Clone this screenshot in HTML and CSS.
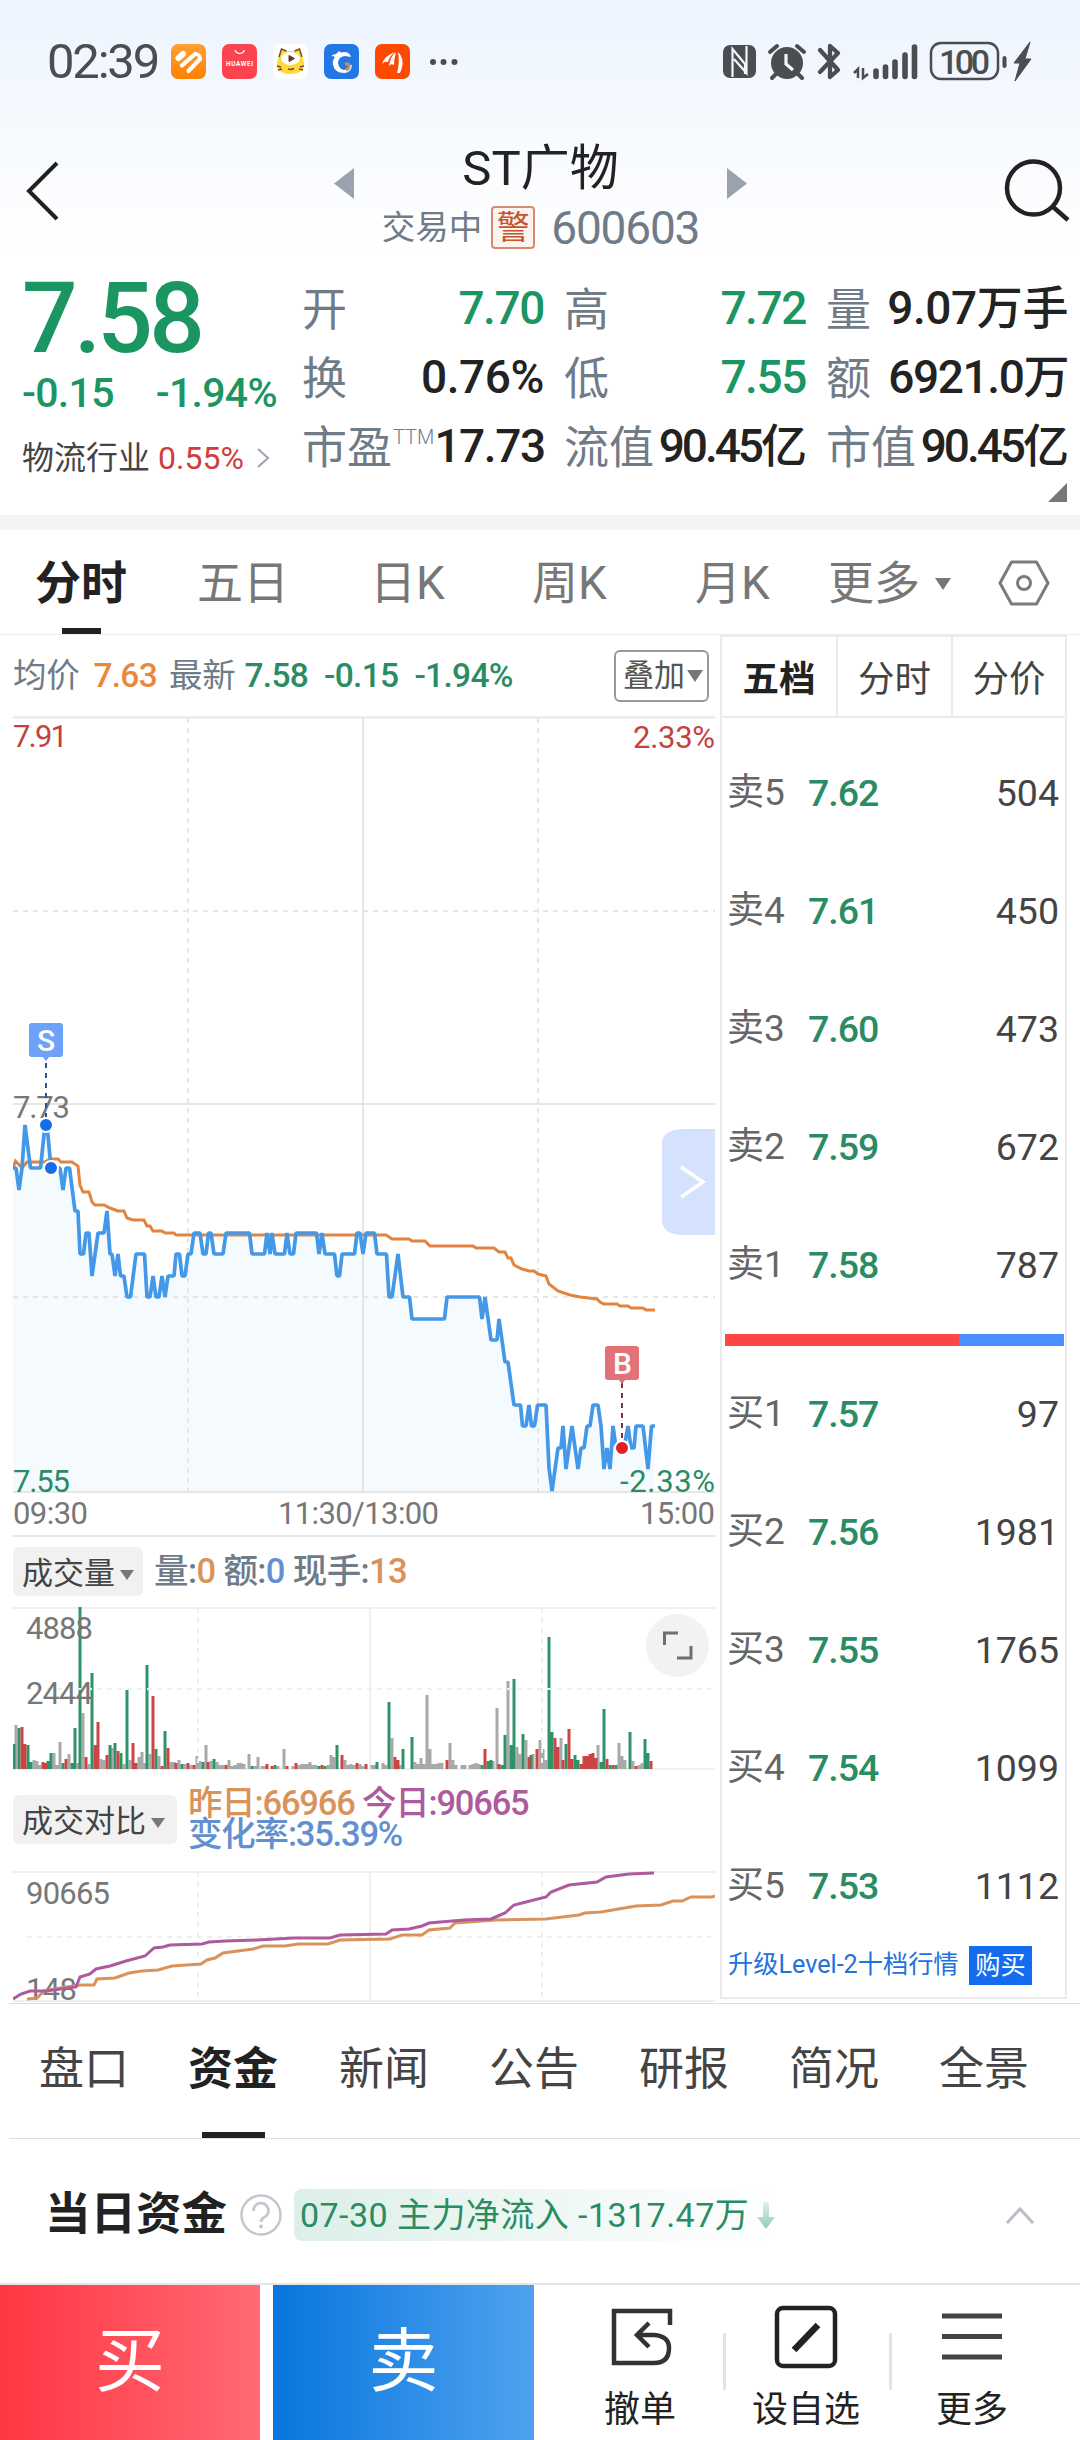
FILE: index.html
```html
<!DOCTYPE html>
<html lang="zh-CN">
<head>
<meta charset="utf-8">
<title>ST广物 600603</title>
<link rel="stylesheet" href="styles.css">
</head>
<body>
<div class="top">
  <div class="status">
    <span class="clock">02:39</span>
    <svg class="app" viewBox="0 0 35 35"><defs><linearGradient id="ga" x2="0" y2="1"><stop offset="0" stop-color="#ff9f35"/><stop offset="1" stop-color="#ff8200"/></linearGradient></defs><rect width="35" height="35" rx="7" fill="url(#ga)"/><g stroke="#fff" stroke-linecap="round" fill="none"><path d="M7.500 14L12 10" stroke-width="6"/><path d="M11 21.500L24 10M17.500 27L29 15" stroke-width="4.200"/><path d="M24 10q5 0 5 5" stroke-width="3.600"/></g></svg>
    <svg class="app" viewBox="0 0 35 35"><rect width="35" height="35" rx="7" fill="#fc4450"/><path d="M13 6a5 5 0 0 0 9.500 0" fill="none" stroke="#fff" stroke-width="1.100"/><text x="4" y="22" font-size="6.400" font-weight="700" fill="#fff" textLength="27">HUAWEI</text></svg>
    <svg class="app" viewBox="0 0 35 35"><rect width="35" height="35" rx="7" fill="#fff"/><path d="M6 13L8.500 5l5 2h8l5-2L29 13q4 8 0 13-4 4-11.500 4T6 26Q2 21 6 13Z" fill="#ffd83a"/><path d="M6 13L8.500 5l5 2M21.500 7l5-2L29 13M4 22l4 1M5 26l4-1M31 22l-4 1M30 26l-4-1M15 25q3 1 6-.5" stroke="#71512f" stroke-width="1.500" fill="none"/><ellipse cx="17.500" cy="14.500" rx="9.500" ry="6.500" fill="#fff"/><path d="M16 11.500v6l5.500-3z" fill="#6b3627" stroke="#6b3627" stroke-linejoin="round"/></svg>
    <svg class="app" viewBox="0 0 35 35"><rect width="35" height="35" rx="7" fill="#2277e5"/><path d="M7 12q3-2 5-2l3-3 2 1.500q8-2 10 4.500l-6-1q-7 1-7 7 1 6 6 7 5-1 6-5h2q-1 8-8 8-9 0-11-8-1-4 2-8-2-1-4-1z" fill="#fff"/><path d="M21 20q4-1 4 2t-3 4" fill="none" stroke="#c28e65" stroke-width="3"/></svg>
    <svg class="app" viewBox="0 0 35 35"><rect width="35" height="35" rx="7" fill="#fe4900"/><path d="M7 20Q9 12 20 8q-6 5-7 10-3-1-6 2zM14 22Q15 13 21 8q-2 7-2 13-3-2-5 1zM22 29Q25 18 23 8q8 8 2 21z" fill="#fff"/></svg>
    <svg class="dots" viewBox="0 0 28 8"><circle cx="3" cy="4" r="3"/><circle cx="13.500" cy="4" r="3"/><circle cx="24.500" cy="4" r="3"/></svg>
    <svg class="sys" viewBox="722 40 312 42" fill="none" stroke="#4b4d50">
      <rect x="723" y="44" width="33" height="33" rx="7" fill="#4b4d50" stroke="none"/>
      <path d="M732.500 76V48L745 63V73M746.500 45V72L734 58" stroke="#f2f6fe" stroke-width="2.200"/>
      <circle cx="787" cy="62" r="16" fill="#4b4d50" stroke="none"/>
      <path d="M770 51l7-6M804 51l-7-6M776 73l-4 4M798 73l4 4" stroke-width="4" stroke-linecap="round"/>
      <path d="M786 53v10l7 6" stroke="#f2f6fe" stroke-width="3.200"/>
      <path d="M820 49L838 69L830 76V45L838 52L820 71" stroke-width="4.300" stroke-linejoin="round" stroke-linecap="round"/>
      <path d="M854 72l4-4v9M868 73l-5 4V67" stroke-width="2.500"/>
      <path d="M876 70v5.500M885.500 66v9.500M895 61v14.500M905 54v21.500M914.500 46v29.500" stroke-width="5.600" stroke-linecap="round"/>
      <rect x="931" y="42" width="67" height="36" rx="10" stroke-width="2.500"/>
      <path d="M1004.500 57v8" stroke-width="4" stroke-linecap="round"/>
      <path d="M1030 41L1014 62h6l-5 18 16-22h-6l5-17z" fill="#4b4d50" stroke="#4b4d50" stroke-width="1" stroke-linejoin="round"/>
      <text x="939" y="72.500" font-size="34" font-weight="500" fill="#4b4d50" stroke="none" textLength="51">100</text>
    </svg>
  </div>
  <div class="header">
    <svg class="back" viewBox="0 0 34 60"><path d="M31 2L3 30L31 58" fill="none" stroke="#222" stroke-width="4"/></svg>
    <svg class="tri prev" viewBox="0 0 20 31"><path d="M20 0v31L0 15.500z"/></svg>
    <div class="name">
      <h1>ST广物</h1>
      <div class="sub"><span class="state">交易中</span><span class="warn">警</span><span class="code">600603</span></div>
    </div>
    <svg class="tri next" viewBox="0 0 20 31"><path d="M0 0v31L20 15.500z"/></svg>
    <svg class="search" viewBox="0 0 66 64"><circle cx="29.500" cy="29" r="26.500" fill="none" stroke="#222" stroke-width="4.500"/><path d="M48 47L64 61" stroke="#222" stroke-width="4.500"/></svg>
  </div>
  <div class="quote">
    <div class="now">
      <div class="price">7.58</div>
      <div class="change"><span>-0.15</span><span>-1.94%</span></div>
      <div class="industry"><span>物流行业</span><b>0.55%</b><svg viewBox="0 0 14 20"><path d="M2 1L12 10L2 19" fill="none" stroke="#9aa2ab" stroke-width="2"/></svg></div>
    </div>
    <div class="stats">
      <div><label>开</label><span class="g">7.70</span></div>
      <div><label>高</label><span class="g">7.72</span></div>
      <div><label>量</label><span class="loose">9.07万手</span></div>
      <div><label>换</label><span class="loose">0.76%</span></div>
      <div><label>低</label><span class="g">7.55</span></div>
      <div><label>额</label><span>6921.0万</span></div>
      <div><label>市盈<sup>TTM</sup></label><span>17.73</span></div>
      <div><label>流值</label><span class="tight">90.45亿</span></div>
      <div><label>市值</label><span class="tight">90.45亿</span></div>
    </div>
  </div>
  <div class="corner"></div>
</div>
<div class="band"></div>

<nav class="periods">
  <span class="on">分时</span><span>五日</span><span>日K</span><span>周K</span><span>月K</span><span class="more">更多<i class="caret"></i></span>
  <svg viewBox="0 0 52 46" fill="none" stroke="#7b7b7b" stroke-width="3"><path d="M13.500 2h25L50 23L38.500 44h-25L2 23z" stroke-linejoin="round"/><circle cx="26" cy="23" r="6.500"/></svg>
</nav>

<main class="board">
  <section class="charts">
    <div class="info">
      <label>均价</label><span class="o">7.63</span><label class="l2">最新</label><span class="v2">7.58</span><span class="v3">-0.15</span><span class="v3">-1.94%</span>
      <button>叠加<i class="caret"></i></button>
    </div>
    <svg class="plot" viewBox="13 716 702 821" height="821" font-size="31">
      <path d="M13 1168H16L19 1190L22 1168L25 1125L30.500 1168H40.500L45 1125H47L51 1168H60L63 1190L66 1168H69.500L75 1211H78L80 1254H83.500L86 1233H89L92 1276L98 1233H104L107 1211L110 1254H112L115 1276L118 1254L120.500 1276H124L127 1297H130.500L136 1254H144.500L147 1297H150L153 1276L156 1297H159L162 1276L165 1297L168 1276H174L176 1254H179.500L182 1276H185L188 1254H191L194 1233H200L203 1254H206L208.500 1233H211L214 1254H223L226 1233H249.500L252 1254H264.500L267 1233L270 1254L272 1233L275 1254H284.500L287 1233L290 1254H293.500L296 1233H316.500L319 1254L322 1233L325 1254H334.500L337 1276H339.500L342 1254H354.500L357 1233H360L363 1254L366 1233H374.500L377 1254H386.500L389 1297H392L398 1254L403 1297H409.500L412 1319H444.500L447 1297H479.500L482 1319L485 1297L491 1340H497L499 1319L505 1362H508L514 1405H520.500L522.500 1426H526L529 1405L531.500 1426H534.500L537.500 1405H546L549 1468L552 1491L558 1448H561L563 1426L566 1469L572 1426L578 1469L581 1448H584L587 1426H590L593 1405H598L601 1426L604 1469L607 1448L610 1469L613 1426L616 1448H624L628 1426L631 1448H634L636 1426H643L648 1469L651.500 1426H655V1492H13Z" fill="#f5faff"/>
      <g stroke="#e6e6e6" stroke-width="2" fill="none">
        <path d="M13 717.500H715M13 1104H715M363 717V1492M13 1492H715M13 1536H715"/>
        <path d="M188 718V1492M538 718V1492M13 911H715M13 1297H715" stroke-dasharray="5 5"/>
      </g>
      <path d="M13 1168L15.500 1161L22 1168L27 1162H45L50 1159H58L61 1162H72L78 1166L80 1185L83 1192H89L92 1202L95 1205H104L110 1208L118 1211H124L127 1218L133 1220H144L147 1226H150L153 1231H162L165 1233H174L176 1235H386L392 1239H409L412 1241H425L430 1246H473L476 1248H494L499 1252H505L508 1258H511L514 1265L522 1269L529 1271H534L538 1274L546 1276L549 1284L558 1291L570 1295L580 1297L597 1299L600 1302L604 1304H617L620 1306H628L631 1308H643L646 1310H655" fill="none" stroke="#e38340" stroke-width="3"/>
      <path d="M13 1168H16L19 1190L22 1168L25 1125L30.500 1168H40.500L45 1125H47L51 1168H60L63 1190L66 1168H69.500L75 1211H78L80 1254H83.500L86 1233H89L92 1276L98 1233H104L107 1211L110 1254H112L115 1276L118 1254L120.500 1276H124L127 1297H130.500L136 1254H144.500L147 1297H150L153 1276L156 1297H159L162 1276L165 1297L168 1276H174L176 1254H179.500L182 1276H185L188 1254H191L194 1233H200L203 1254H206L208.500 1233H211L214 1254H223L226 1233H249.500L252 1254H264.500L267 1233L270 1254L272 1233L275 1254H284.500L287 1233L290 1254H293.500L296 1233H316.500L319 1254L322 1233L325 1254H334.500L337 1276H339.500L342 1254H354.500L357 1233H360L363 1254L366 1233H374.500L377 1254H386.500L389 1297H392L398 1254L403 1297H409.500L412 1319H444.500L447 1297H479.500L482 1319L485 1297L491 1340H497L499 1319L505 1362H508L514 1405H520.500L522.500 1426H526L529 1405L531.500 1426H534.500L537.500 1405H546L549 1468L552 1491L558 1448H561L563 1426L566 1469L572 1426L578 1469L581 1448H584L587 1426H590L593 1405H598L601 1426L604 1469L607 1448L610 1469L613 1426L616 1448H624L628 1426L631 1448H634L636 1426H643L648 1469L651.500 1426H655" fill="none" stroke="#4398e8" stroke-width="3.700" stroke-linejoin="bevel"/>
      <g fill="#c44142"><text x="13" y="747" textLength="55">7.91</text><text x="633" y="748" textLength="82">2.33%</text></g>
      <g fill="#2a8c63"><text x="13" y="1492" textLength="57">7.55</text><text x="620" y="1492" textLength="95">-2.33%</text></g>
      <g fill="#777"><text x="13" y="1118" textLength="57">7.73</text><text x="13" y="1524" textLength="75">09:30</text><text x="278" y="1524" textLength="161">11:30/13:00</text><text x="640" y="1524" textLength="75">15:00</text></g>
      <path d="M46 1063V1120" stroke="#1e5793" stroke-width="2" stroke-dasharray="5 5"/>
      <path d="M622 1383V1442" stroke="#7f3138" stroke-width="2" stroke-dasharray="5 5"/>
      <path d="M42 1056h8l-4 5z" fill="#6ea1f8"/><rect x="29" y="1023" width="34" height="34" rx="3" fill="#6ea1f8"/>
      <path d="M618 1379h8l-4 5z" fill="#e27277"/><rect x="605" y="1346" width="34" height="34" rx="3" fill="#e27277"/>
      <g fill="#fff" font-weight="500" text-anchor="middle" font-size="30"><text x="46" y="1051">S</text><text x="622.500" y="1374">B</text></g>
      <g stroke="#fff" stroke-width="2"><circle cx="46" cy="1125" r="7" fill="#146ce8"/><circle cx="51" cy="1168" r="7" fill="#146ce8"/><circle cx="622" cy="1448" r="7" fill="#dd2023"/></g>
      <path d="M715 1129H682Q662 1130 662 1144V1220Q662 1234 682 1235H715Z" fill="#d5e2fd"/>
      <path d="M681 1167L703 1182L681 1197" fill="none" stroke="#fff" stroke-width="3.500"/>
    </svg>
    <div class="legend">
      <button>成交量<i class="caret"></i></button>
      <p>量:<b class="co">0</b> 额:<b class="cb">0</b> 现手:<b class="co">13</b></p>
    </div>
    <svg class="plot" viewBox="13 1606 702 166" height="166" font-size="31">
      <g stroke="#efefef" stroke-width="2" fill="none"><path d="M13 1608H715M370 1608V1768M13 1769H715"/></g>
      <g fill="none" stroke-width="3">
        <path stroke="#a9a9a9" d="M16 1769v-44M34 1769v-9M37 1769v-8M40 1769v-4M54 1769v-16M57 1769v-4M60 1769v-27M69 1769v-15M78 1769v-6M83 1769v-56M89 1769v-5M101 1769v-10M104 1769v-9M112 1769v-21M124 1769v-5M130 1769v-9M139 1769v-12M142 1769v-17M145 1769v-6M150 1769v-15M159 1769v-13M171 1769v-7M174 1769v-7M179 1769v-9M185 1769v-5M191 1769v-4M197 1769v-13M200 1769v-8M206 1769v-24M211 1769v-8M217 1769v-7M220 1769v-4M223 1769v-4M229 1769v-9M232 1769v-3M235 1769v-4M238 1769v-6M241 1769v-6M244 1769v-5M249 1769v-15M255 1769v-3M258 1769v-12M262 1769v-3M265 1769v-3M278 1769v-3M284 1769v-20M293 1769v-3M299 1769v-4M302 1769v-5M305 1769v-5M308 1769v-5M310 1769v-7M313 1769v-4M316 1769v-4M328 1769v-4M331 1769v-14M334 1769v-12M345 1769v-9M348 1769v-4M351 1769v-5M354 1769v-4M360 1769v-5M363 1769v-3M372 1769v-4M375 1769v-4M383 1769v-6M386 1769v-4M392 1769v-31M400 1769v-4M415 1769v-7M418 1769v-5M421 1769v-11M424 1769v-5M427 1769v-74M430 1769v-20M433 1769v-5M436 1769v-5M439 1769v-6M442 1769v-6M450 1769v-26M453 1769v-9M456 1769v-4M462 1769v-4M465 1769v-4M470 1769v-4M473 1769v-5M476 1769v-6M479 1769v-5M493 1769v-8M497 1769v-61M508 1769v-88M517 1769v-22M520 1769v-15M526 1769v-29M533 1769v-15M540 1769v-29M543 1769v-20M546 1769v-9M561 1769v-31M598 1769v-24M619 1769v-26M622 1769v-13M625 1769v-9M633 1769v-8M639 1769v-4M642 1769v-6"/>
        <path stroke="#2f9268" d="M14 1769v-25M19 1769v-41M28 1769v-24M31 1769v-7M48 1769v-8M51 1769v-16M63 1769v-6M72 1769v-6M75 1769v-41M80 1769v-162M92 1769v-96M110 1769v-24M115 1769v-26M121 1769v-16M127 1769v-79M147 1769v-104M156 1769v-20M165 1769v-38M182 1769v-5M203 1769v-7M214 1769v-10M252 1769v-3M275 1769v-4M319 1769v-3M325 1769v-3M337 1769v-24M377 1769v-7M389 1769v-67M403 1769v-20M412 1769v-32M482 1769v-4M488 1769v-8M491 1769v-9M502 1769v-4M505 1769v-34M511 1769v-24M514 1769v-90M523 1769v-35M531 1769v-14M549 1769v-132M552 1769v-37M566 1769v-25M575 1769v-14M578 1769v-9M601 1769v-7M604 1769v-60M610 1769v-4M616 1769v-4M630 1769v-37M645 1769v-30M648 1769v-16"/>
        <path stroke="#cb4545" d="M22 1769v-42M25 1769v-25M43 1769v-7M45.500 1769v-6M66 1769v-10M86 1769v-12M95 1769v-24M98 1769v-47M107 1769v-14M118 1769v-18M133 1769v-26M136 1769v-6M153 1769v-73M162 1769v-3M168 1769v-21M176 1769v-6M188 1769v-6M194 1769v-4M208 1769v-7M226 1769v-4M267 1769v-5M272 1769v-3M287 1769v-3M296 1769v-6M322 1769v-4M342 1769v-14M357 1769v-6M366 1769v-5M395 1769v-12M398 1769v-9M447 1769v-9M485 1769v-20M499 1769v-5M529 1769v-12M537 1769v-20M555 1769v-31M558 1769v-22M563 1769v-9M569 1769v-40M572 1769v-10M581 1769v-5M584 1769v-13M587 1769v-13M590 1769v-15M593 1769v-16M596 1769v-11M607 1769v-10M613 1769v-4M636 1769v-3M651 1769v-8"/>
      </g>
      <path d="M198 1608V1768M542 1608V1768M27 1689H711" stroke="#efefef" stroke-width="2" stroke-dasharray="5 5" fill="none"/>
      <g fill="#777"><text x="26" y="1639" textLength="67">4888</text><text x="26" y="1704" textLength="67">2444</text></g>
      <circle cx="677.500" cy="1645.500" r="31.500" fill="#f2f2f2"/>
      <path d="M664.500 1645V1633H678M691 1646V1658H677" fill="none" stroke="#6f6f6f" stroke-width="3"/>
    </svg>
    <div class="legend compare">
      <button>成交对比<i class="caret"></i></button>
      <p><b class="co">昨日:66966</b> <b class="cp">今日:90665</b><br><b class="cb">变化率:35.39%</b></p>
    </div>
    <svg class="plot" viewBox="13 1871 702 132" height="132" font-size="31">
      <g stroke="#efefef" stroke-width="2" fill="none"><path d="M13 1872H715M370 1872V2001M13 2001H715"/><path d="M198 1872V2001M542 1872V2001M27 1937H711" stroke-dasharray="5 5"/></g>
      <g fill="#777"><text x="26" y="1904" textLength="84">90665</text><text x="26" y="2000" textLength="51">148</text></g>
      <g fill="none" stroke-width="3">
        <path stroke="#d9935a" d="M27 1999L37 1998L44 1991L60 1988L80 1985H94L97 1979L115 1978L129 1973L142 1971L158 1970L172 1966L201 1964L207 1960L215 1958L223 1953L253 1949L263 1946H285L298 1944H328L340 1940L390 1939L402 1935H422L429 1930L450 1928L455 1923L496 1920L546 1919L579 1915L585 1913L601 1912L636 1906L661 1905L673 1901H682L691 1897H712L715 1896"/>
        <path stroke="#ad5a9e" d="M13 1999L21 1994L30 1991H46L76 1987L80 1977L90 1974L96 1969L110 1966L126 1961L145 1956L154 1948L163 1947L170 1945L202 1944L209 1942L225 1941L257 1940L294 1938H330L340 1935L386 1934L392 1930L409 1929L422 1926L429 1923L464 1920L491 1919L498 1916L505 1913L514 1905L526 1902L546 1897L551 1892L569 1885L597 1882L606 1877L629 1874L654 1873"/>
      </g>
    </svg>
  </section>
  <aside class="book">
    <div class="tabs"><span class="on">五档</span><span>分时</span><span>分价</span></div>
    <ul>
      <li><span>卖5</span><b>7.62</b><em>504</em></li>
      <li><span>卖4</span><b>7.61</b><em>450</em></li>
      <li><span>卖3</span><b>7.60</b><em>473</em></li>
      <li><span>卖2</span><b>7.59</b><em>672</em></li>
      <li><span>卖1</span><b>7.58</b><em>787</em></li>
    </ul>
    <div class="ratio"><i></i><i></i></div>
    <ul>
      <li><span>买1</span><b>7.57</b><em>97</em></li>
      <li><span>买2</span><b>7.56</b><em>1981</em></li>
      <li><span>买3</span><b>7.55</b><em>1765</em></li>
      <li><span>买4</span><b>7.54</b><em>1099</em></li>
      <li><span>买5</span><b>7.53</b><em>1112</em></li>
    </ul>
    <div class="promo"><span>升级Level-2十档行情</span><button>购买</button></div>
  </aside>
</main>

<nav class="sections"><span>盘口</span><span class="on">资金</span><span>新闻</span><span>公告</span><span>研报</span><span>简况</span><span>全景</span></nav>
<section class="fund">
  <h2>当日资金</h2>
  <svg class="help" viewBox="0 0 42 42"><circle cx="21" cy="21" r="19.500" fill="none" stroke="#c3c8ce" stroke-width="2.500"/><path d="M13.500 17a7.500 7.500 0 1 1 10.500 6.500q-3 1.500-3 4.500" fill="none" stroke="#c3c8ce" stroke-width="2.800"/><circle cx="21" cy="32.500" r="2" fill="#c3c8ce"/></svg>
  <div class="flow">07-30 主力净流入 -1317.47万<svg viewBox="0 0 18 27"><defs><linearGradient id="gd" x2="0" y2="1"><stop offset="0" stop-color="#def2ea"/><stop offset="1" stop-color="#8fceb3"/></linearGradient></defs><path d="M6 0h6v15h6L9 27L0 15h6z" fill="url(#gd)"/></svg></div>
  <svg class="up" viewBox="0 0 30 18"><path d="M2 17L15 3L28 17" fill="none" stroke="#b9bfc6" stroke-width="3"/></svg>
</section>
<footer class="bar">
  <button class="buy">买</button><button class="sell">卖</button>
  <div class="act"><svg class="undo" viewBox="0 0 64 64" fill="none" stroke="#333" stroke-width="4.500"><path d="M60 20V6H4V58H44Q59 58 59 43Q59 31 44 30H28M39 18L27 30L39 42"/></svg>撤单</div>
  <div class="act wide"><svg viewBox="0 0 64 64" fill="none" stroke="#222" stroke-width="4.500"><rect x="3" y="3" width="58" height="58" rx="6"/><path d="M20 45L44 20" stroke-width="6.500"/></svg>设自选</div>
  <div class="act last"><svg viewBox="0 0 64 64" fill="none" stroke="#444" stroke-width="4.800"><path d="M2 11H62M2 31.500H62M2 52H62"/></svg>更多</div>
</footer>
</body>
</html>
```
FILE: styles.css
```css
* { box-sizing: border-box; margin: 0; padding: 0; }
body { width: 1080px; height: 2440px; overflow: hidden; background: #fff; color: #222; font-family: Roboto, "Noto Sans CJK SC", sans-serif; }
button { border: 0; background: none; font: inherit; color: inherit; }
svg { display: block; flex: none; }
i, em { font-style: normal; }
.caret { display: inline-block; width: 16px; height: 12px; background: #777; clip-path: polygon(0 0, 100% 0, 50% 100%); }

.top { height: 515px; background: linear-gradient(#edf4fe, #fff 250px); }
.status { display: flex; align-items: center; height: 123px; padding-left: 47px; color: #4b4d50; }
.clock { width: 124px; font-size: 49px; line-height: 56px; letter-spacing: -2.2px; }
.app { width: 35px; height: 35px; margin-right: 16px; }
.dots { width: 28px; height: 8px; margin-left: 4px; fill: #4b4d50; }
.sys { width: 312px; height: 42px; margin-left: 264px; }

.header { display: flex; height: 147px; align-items: flex-start; }
.back { width: 34px; height: 60px; margin: 38px 0 0 26px; }
.tri { width: 20px; height: 31px; fill: #9aa3ad; margin-top: 45px; }
.prev { margin-left: 274px; }
.name { flex: none; width: 373px; text-align: center; }
.name h1 { padding-top: 16px; font-size: 49px; line-height: 60px; font-weight: 400; }
.sub { display: flex; justify-content: center; align-items: center; height: 57px; color: #707b88; gap: 9px; }
.state { font-size: 33.500px; line-height: 40px; }
.warn { width: 44px; height: 43px; border: 2px solid #d88970; border-radius: 4px; background: #fdf3ef; color: #c5532f; font-size: 33px; line-height: 40px; }
.code { margin-left: 7px; font-size: 46px; line-height: 52px; letter-spacing: -1.2px; }
.search { width: 66px; height: 64px; margin: 36px 0 0 257px; }

.quote { display: flex; height: 213px; color: #222; }
.now { flex: none; width: 302px; padding-left: 22px; color: #1b9562; }
.price { height: 95px; padding-top: 1px; font-size: 98px; line-height: 96px; font-weight: 500; letter-spacing: -3.800px; }
.change { display: flex; gap: 42px; height: 56px; font-size: 41px; line-height: 56px; font-weight: 500; letter-spacing: -.7px; }
.industry { display: flex; align-items: center; height: 74px; font-size: 32px; line-height: 40px; color: #444; }
.industry b { margin-left: 8px; width: 90px; font-weight: 400; color: #d33b3b; }
.industry svg { width: 14px; height: 20px; margin-left: 8px; }
.stats { display: grid; grid-template-columns: repeat(3, 242px); column-gap: 20px; grid-auto-rows: 69px; padding-top: 4px; }
.stats div { display: flex; justify-content: space-between; line-height: 69px; white-space: nowrap; }
.stats label { font-size: 45px; color: #707b88; padding-top: 4px; line-height: 65px; }
.stats span { font-size: 46px; letter-spacing: -1.400px; font-weight: 500; }
.stats .loose { letter-spacing: -.4px; }
.stats .tight { letter-spacing: -3px; padding-right: 2px; }
.stats .g { color: #1b9562; }
.stats sup { font-size: 20px; vertical-align: 20px; line-height: 0; font-weight: 300; margin-left: 1px; }
.corner { width: 19px; height: 19px; margin: 0 0 0 1048px; background: #777; clip-path: polygon(100% 0, 100% 100%, 0 100%); }
.band { height: 15px; background: #f4f4f4; }

.periods { position: relative; display: flex; height: 105px; font-size: 46px; line-height: 107px; color: #777; border-bottom: 1px solid #eee; padding-left: 35px; }
.periods span { flex: none; width: 170px; height: 104px; }
.periods span:nth-child(1) { width: 162px; }
.periods span:nth-child(2) { width: 173px; }
.periods span:nth-child(3) { width: 162px; }
.periods span:nth-child(4) { width: 163px; }
.periods span:nth-child(5) { width: 133px; }
.periods .on { color: #222; font-weight: 700; position: relative; }
.periods .on::after { content: ""; position: absolute; left: 27px; bottom: 0; width: 39px; height: 6px; background: #222; }
.periods .caret { margin-left: 15px; vertical-align: 9px; }
.periods svg { width: 52px; height: 46px; margin: 30px 0 0 0; }

.board { display: flex; height: 1368px; }
.charts { flex: none; width: 720px; padding-left: 13px; }
.plot { width: 702px; }
.info { position: relative; display: flex; height: 81px; line-height: 81px; font-size: 33.500px; font-weight: 500; color: #2a8c63; letter-spacing: -.7px; }
.info label { color: #707b88; font-weight: 400; letter-spacing: -.3px; }
.info .o { color: #e9883d; margin-left: 14px; }
.l2 { margin-left: 12px; }
.v2 { margin-left: 9px; }
.v3 { margin-left: 16px; }
.info button { display: flex; align-items: center; margin: 15px 11px 0 auto; width: 95px; height: 52px; border: 2px solid #999; border-radius: 6px; padding-left: 7px; font-size: 31px; font-weight: 400; line-height: 48px; color: #555; }
.info .caret { margin-left: 2px; }
.legend { display: flex; height: 69px; padding-top: 10px; }
.legend button { display: flex; align-items: center; width: 130px; height: 49px; padding: 0 0 2px 9px; border-radius: 6px; background: #f1f1f1; font-size: 31px; color: #444; }
.legend .caret { width: 14px; height: 10px; margin: 9px 0 0 5px; }
.legend p { margin-left: 11px; font-size: 34.500px; line-height: 49px; font-weight: 500; color: #707b88; letter-spacing: -.6px; white-space: nowrap; }
.legend b { font-weight: 500; }
.co { color: #d9935a; }
.cb { color: #628fd0; }
.cp { color: #ad5a9e; }
.compare { height: 99px; padding-top: 23px; }
.compare button { width: 164px; }
.compare p { line-height: 31px; margin-top: -7px; letter-spacing: -1.2px; }

.book { flex: none; width: 347px; height: 1364px; border: 2px solid #ebebeb; }
.tabs { display: grid; grid-template-columns: 114px 115px 114px; height: 81px; border-bottom: 2px solid #ebebeb; text-align: center; font-size: 36.500px; line-height: 85px; color: #444; }
.tabs span { height: 79px; }
.tabs span + span { border-left: 2px solid #ebebeb; }
.tabs .on { font-weight: 700; color: #222; }
.book ul { list-style: none; }
.book .tabs + ul { padding-top: 15px; }
.book li { display: flex; height: 118px; line-height: 120px; font-size: 37.500px; padding: 0 6px 0 5px; color: #444; }
.book li span { width: 81px; color: #666; font-size: 37px; }
.book b { color: #2a8c63; font-weight: 500; letter-spacing: -1px; }
.book em { margin-left: auto; }
.ratio { display: flex; height: 12px; margin: 11px 1px 8px 3px; }
.ratio i { flex: 234; background: #fe4744; }
.ratio i + i { flex: 105; background: #4a8fff; }
.promo { display: flex; justify-content: space-between; margin: 2px 33px 0 6px; font-size: 25.200px; line-height: 38px; color: #2271dc; white-space: nowrap; }
.promo button { width: 63px; height: 39px; background: #146df0; color: #fff; }

.sections { display: flex; height: 136px; margin-left: 9px; border-top: 1px solid #dedede; border-bottom: 1px solid #dedede; font-size: 45px; line-height: 131px; color: #444; }
.sections span { flex: none; width: 150px; height: 134px; text-align: center; }
.sections .on { position: relative; left: -1px; color: #222; font-weight: 700; }
.sections .on::after { content: ""; position: absolute; left: 44px; bottom: 0; width: 63px; height: 6px; background: #222; }

.fund { display: flex; align-items: center; height: 144px; padding: 8px 0 0 45px; }
.fund h2 { flex: none; width: 195px; font-size: 45.500px; line-height: 56px; }
.help { width: 42px; height: 42px; }
.flow { display: flex; flex: none; align-items: center; width: 482px; height: 52px; margin-left: 12px; padding-left: 6px; border-radius: 8px; background: linear-gradient(90deg, #dcefe8, #fff); color: #2a8c63; font-size: 34px; line-height: 50px; letter-spacing: .45px; white-space: nowrap; }
.flow svg { width: 18px; height: 27px; margin-left: 8px; }
.up { width: 30px; height: 18px; margin: 0 0 0 229px; }

.bar { display: flex; height: 157px; border-top: 2px solid #e5e5e5; }
.buy, .sell { flex: none; width: 260px; color: #fff; font-size: 70px; line-height: 155px; }
.buy { background: linear-gradient(90deg, #ff3643, #ff6a74); }
.sell { width: 261px; margin-left: 13px; background: linear-gradient(90deg, #0776dd, #50a2ef); }
.act { position: relative; display: flex; flex: none; flex-direction: column; align-items: center; width: 166px; padding-top: 20px; font-size: 36px; line-height: 44px; }
.act svg { width: 64px; height: 64px; margin-bottom: 19px; }
.act .undo { margin-left: 4px; }
.sell + .act { margin-left: 23px; }
.act + .act::before { content: ""; position: absolute; left: 0; top: 48px; width: 3px; height: 57px; background: #e3e3e3; }
```
